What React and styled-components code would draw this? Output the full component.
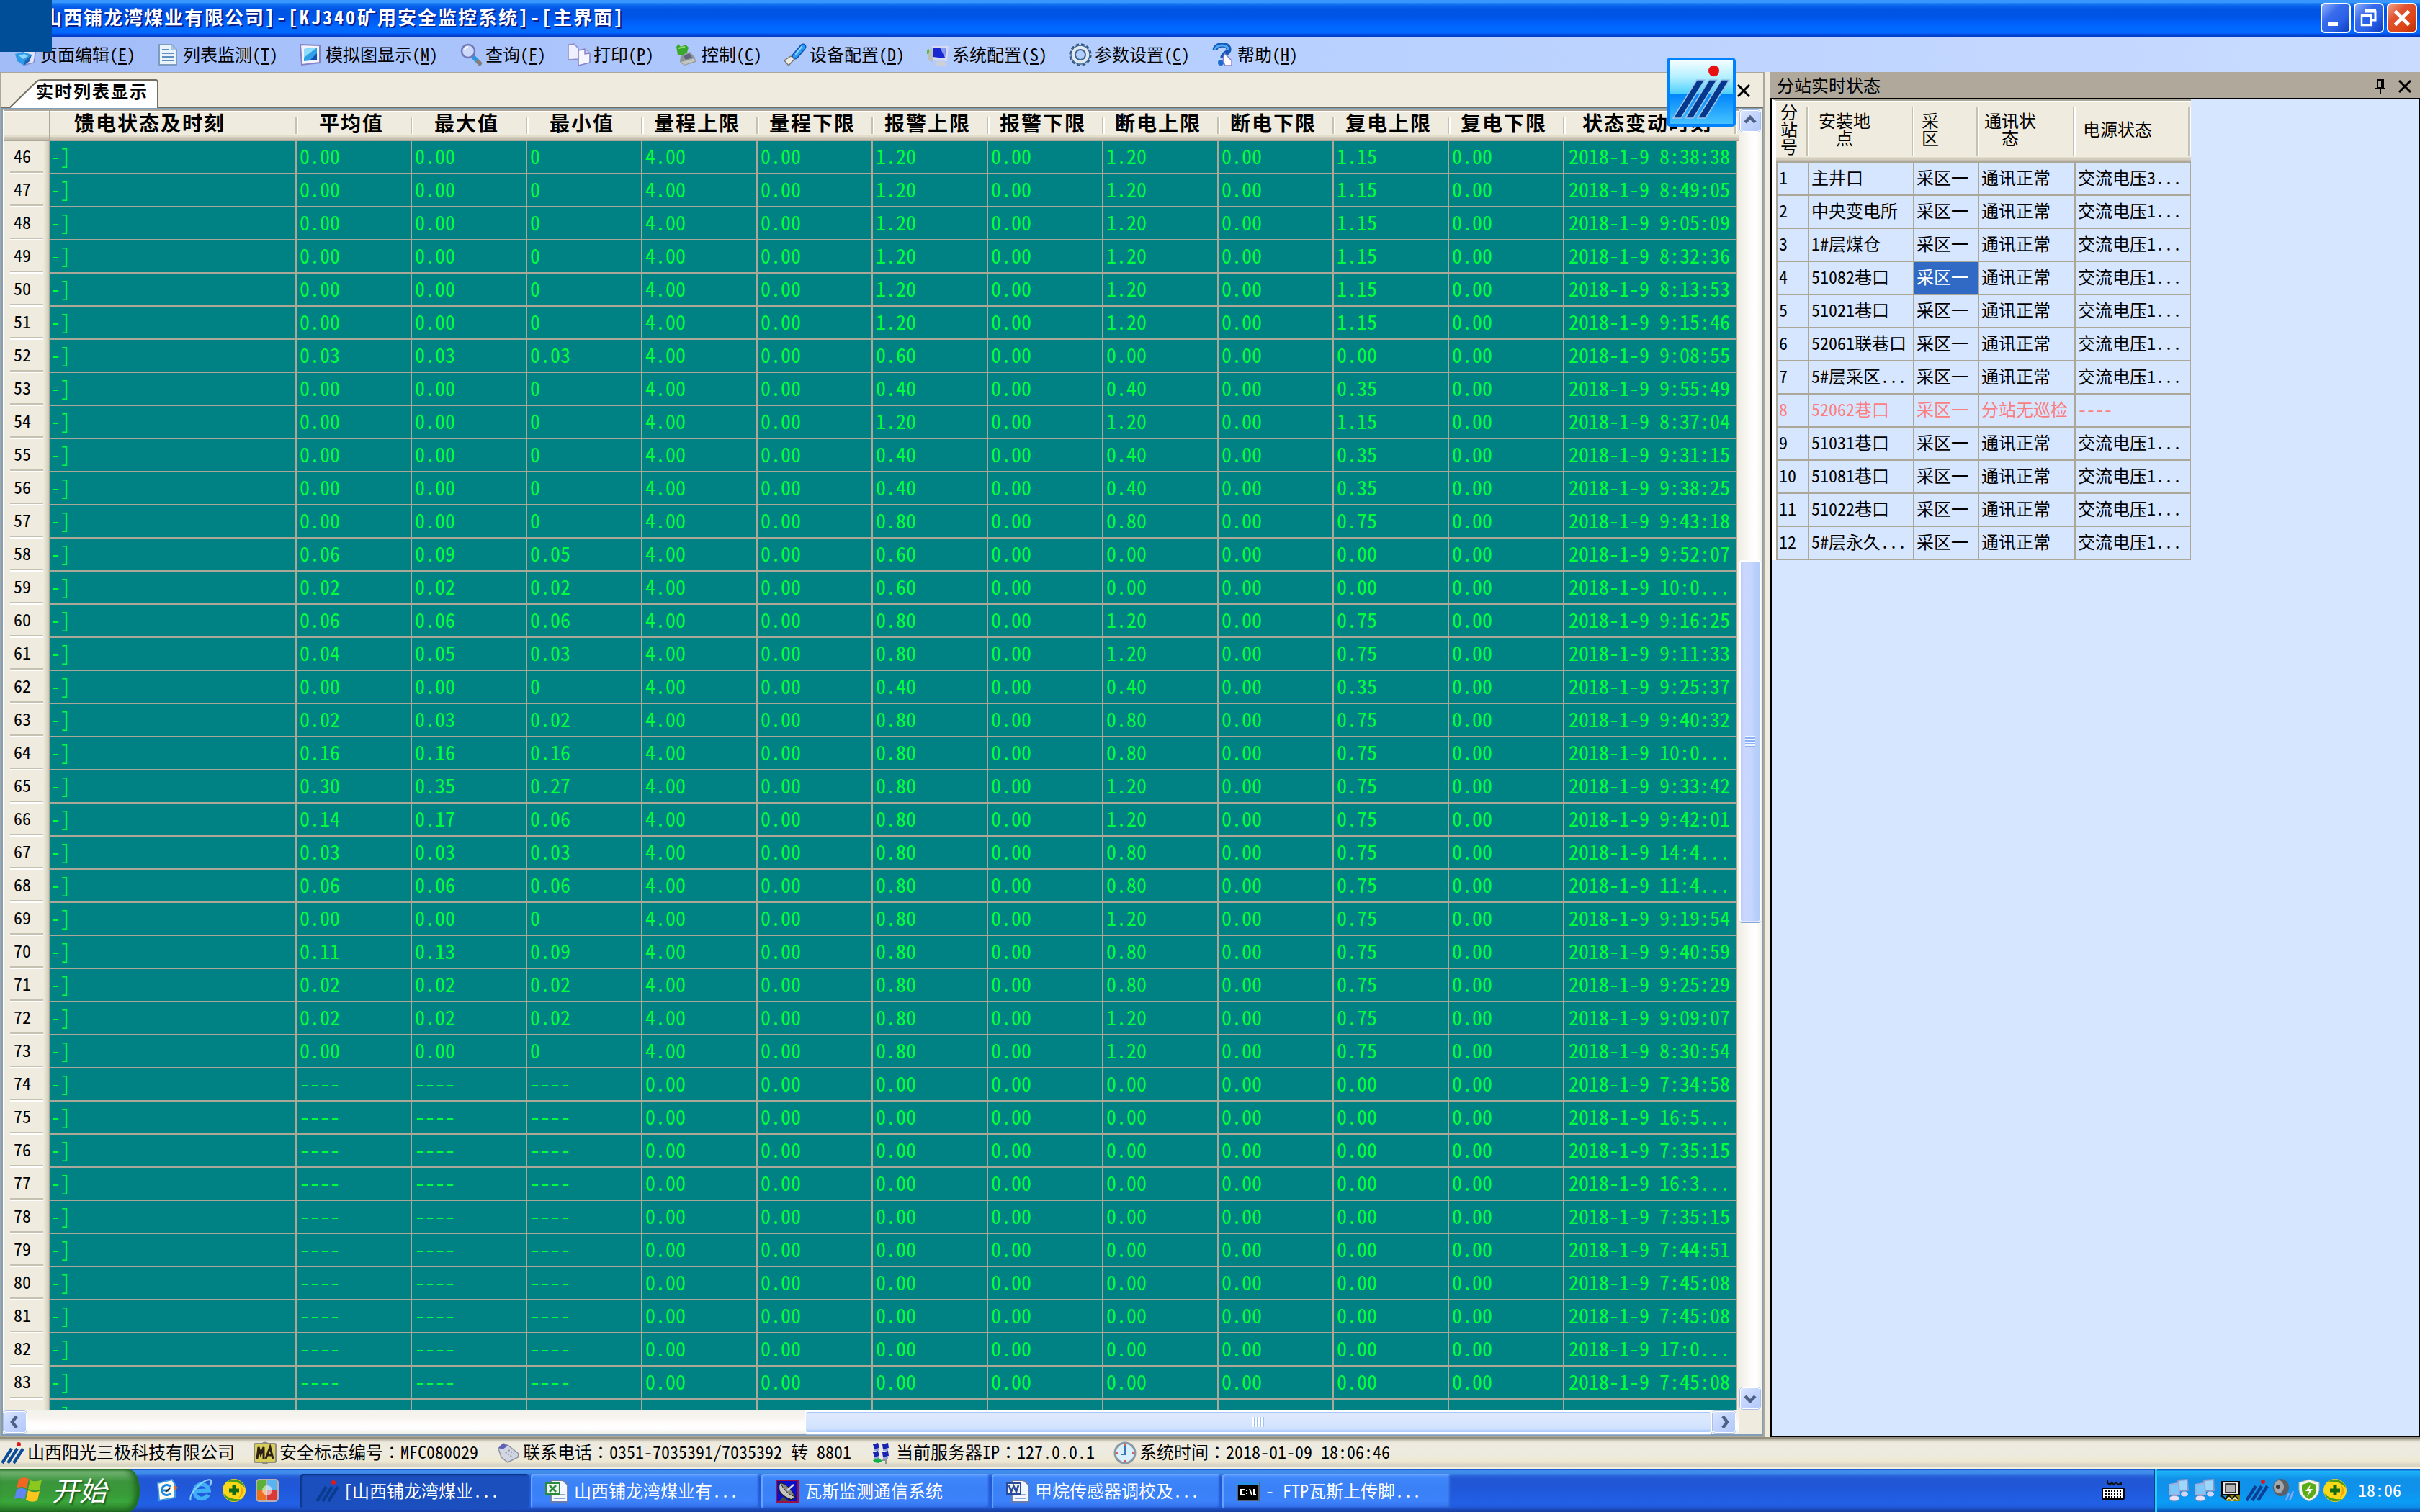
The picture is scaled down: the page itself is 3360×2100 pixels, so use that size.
import React from 'react';
import styled, { createGlobalStyle, css } from 'styled-components';

const GlobalStyle = createGlobalStyle`
  *, *::before, *::after { box-sizing: border-box; }
  html, body { margin: 0; padding: 0; }
  body {
    width: 3360px;
    height: 2100px;
    overflow: hidden;
    background: #efebde;
    color: #000;
    font-family: "Noto Sans Mono CJK SC", "Noto Sans CJK SC", "Liberation Mono", monospace;
    font-size: 24px;
    line-height: 28px;
    font-kerning: none;
  }
`;

const Screen = styled.div`
  position: relative;
  width: 3360px;
  height: 2100px;
  display: flex;
  flex-direction: column;
  overflow: hidden;
  white-space: nowrap;
`;

/* ---------- title bar ---------- */

const TitleBar = styled.header`
  height: 52px;
  flex: none;
  display: flex;
  align-items: flex-start;
  justify-content: space-between;
  padding: 4px 4px 0 44px;
  background: linear-gradient(
    to bottom,
    #3a96ff 0, #3a96ff 4px, #2184f6 4px, #0a66ee 8px, #0054e3 13px, #0055e8 24px,
    #0060fc 32px, #006aff 40px, #0066ff 46px, #0046d8 48px, #0038c0 52px
  );
`;

const TitleText = styled.h1`
  margin: 0;
  padding-top: 3px;
  font-size: 26px;
  line-height: 32px;
  font-weight: 700;
  letter-spacing: 2px;
  color: #fff;
  text-shadow: 2px 2px 0 #0a1f8a;
`;

const Latin = styled.span`
  letter-spacing: 3px;
`;

const WindowButtons = styled.div`
  display: flex;
  gap: 4px;
`;

const WindowButton = styled.button`
  width: 42px;
  height: 42px;
  padding: 0;
  border: 2px solid #fff;
  border-radius: 6px;
  background: ${(p) =>
    p.$close
      ? 'linear-gradient(135deg, #f0a08a 0%, #e0532f 35%, #dc4416 70%, #b83008 100%)'
      : 'linear-gradient(135deg, #8fb0fa 0%, #3a6cec 35%, #2a62e8 65%, #0c3cc0 100%)'};
  display: flex;
  align-items: center;
  justify-content: center;
`;

const CornerPatch = styled.div`
  position: absolute;
  left: 0;
  top: 0;
  width: 72px;
  height: 72px;
  background: #004e98;
`;

const FloatingBadge = styled.div`
  position: absolute;
  left: 2314px;
  top: 80px;
  width: 96px;
  height: 96px;
`;

/* ---------- menu ---------- */

const MenuBar = styled.nav`
  height: 48px;
  flex: none;
  display: flex;
  align-items: center;
  gap: 30px;
  padding-left: 20px;
  background: linear-gradient(to right, #a2bcf8 0, #b4ceff 45%, #c9dbff 100%);
`;

const IconLabel = styled.div`
  display: flex;
  align-items: center;
  gap: 4px;
  > span { margin-bottom: 3px; }
  u {
    text-decoration-thickness: 2px;
    text-underline-offset: 3px;
  }
`;

const WideColon = styled.span`
  font-family: "Noto Sans Mono CJK TC", "Noto Sans CJK TC", monospace;
`;

const Icon32 = styled.svg`
  width: 32px;
  height: 32px;
  flex: none;
  display: block;
`;

/* ---------- workspace ---------- */

const Workspace = styled.main`
  height: 1896px;
  flex: none;
  display: flex;
  background: #efebde;
`;

const DocumentPane = styled.section`
  width: 2450px;
  flex: none;
  display: flex;
  flex-direction: column;
  border: 2px solid #aca899;
`;

const TabStrip = styled.div`
  height: 48px;
  flex: none;
  display: flex;
  align-items: flex-end;
  justify-content: space-between;
  padding: 0 10px 0 10px;
  border-bottom: 2px solid #716f64;
`;

const Tab = styled.div`
  position: relative;
  width: 208px;
  height: 40px;
  margin-bottom: -2px;
  padding: 2px 0 0 38px;
  font-weight: 700;
  letter-spacing: 2px;
`;

const TabShape = styled.svg`
  position: absolute;
  left: 0;
  top: 0;
  width: 208px;
  height: 40px;
`;

const TabText = styled.span`
  position: relative;
`;

const TabClose = styled.div`
  height: 46px;
  display: flex;
  align-items: center;
  padding: 2px 8px 0 0;
`;

const GridFrame = styled.div`
  flex: 1;
  min-height: 0;
  display: grid;
  grid-template-columns: 2410px 32px;
  grid-template-rows: 1806px 34px;
  border: 2px solid #7f9db9;
`;

const GridBody = styled.div`
  overflow: hidden;
  border-top: 2px solid #aca899;
  border-left: 2px solid #fff;
`;

const ColumnHeaders = styled.div`
  display: grid;
  grid-template-columns: 64px 342px repeat(11, 160px) 238px;
  height: 42px;
  background: linear-gradient(
    to bottom,
    #fff 0, #fff 2px, #efebde 2px, #efebde 34px, #e3ddcb 34px, #e3ddcb 36px,
    #d3cdbd 36px, #d3cdbd 38px, #cbc5b6 38px, #c4bcae 40px, #aca899 40px
  );
`;

const ColumnHeader = styled.div`
  position: relative;
  font-size: 28px;
  line-height: 34px;
  font-weight: 700;
  letter-spacing: 2px;
  text-align: center;
  padding: 0 ${(p) => p.$trail || 8}px 0 0;
  > span { position: relative; top: -1px; }
  &::after {
    content: '';
    position: absolute;
    right: -2px;
    top: 8px;
    width: 4px;
    height: 24px;
    background: linear-gradient(to right, #c5c2b2 50%, #fff 50%);
  }
`;

const CornerCell = styled.div`
  border-right: 2px solid #aca899;
  margin-bottom: 2px;
`;

const GridRow = styled.div`
  display: grid;
  grid-template-columns: 64px 342px repeat(11, 160px) 240px;
  height: 46px;
`;

const RowNumber = styled.div`
  position: relative;
  padding: 6px 14px 0 0;
  text-align: center;
  background: linear-gradient(to right, #efebde 0, #efebde 54px, #e2decd 58px, #cbc7b8 62px, #aca899 62px);
  &::after {
    content: '';
    position: absolute;
    left: 8px;
    bottom: 0;
    width: 46px;
    height: 4px;
    background: linear-gradient(to bottom, #c5c2b2 50%, #fff 50%);
  }
`;

const Cell = styled.div`
  overflow: hidden;
  padding: 3px 0 0 ${(p) => (p.$pad === undefined ? 4 : p.$pad)}px;
  font-size: 28px;
  line-height: 34px;
  color: #00ff3c;
  background: #008284;
  border-right: 2px solid #aca899;
  border-bottom: 2px solid #aca899;
`;

/* ---------- scrollbars ---------- */

const VTrack = styled.div`
  display: flex;
  flex-direction: column;
  align-items: center;
  background: linear-gradient(to right, #eeede5 0, #f6f4ee 8px, #fefdfb 18px, #fff 24px, #f3f1ea 32px);
`;

const HTrack = styled.div`
  display: flex;
  align-items: center;
  padding-right: 3px;
  background: linear-gradient(to bottom, #f3f1ec 0, #f6f3ee 10px, #fefdfb 18px, #fff 26px, #efede5 34px);
`;

const ScrollButton = styled.button`
  flex: none;
  width: ${(p) => p.$w}px;
  height: ${(p) => p.$h}px;
  padding: 0;
  border: 2px solid #fff;
  border-radius: 5px;
  outline: 1px solid #a9bfe4;
  outline-offset: -1px;
  background: linear-gradient(135deg, #dbe5fe 0%, #c6d6fd 40%, #b4c9fb 100%);
  display: flex;
  align-items: center;
  justify-content: center;
`;

const Spacer = styled.div`
  flex: ${(p) => (p.$size ? 'none' : 1)};
  height: ${(p) => (p.$size ? `${p.$size}px` : 'auto')};
`;

const VThumb = styled.div`
  flex: none;
  width: 30px;
  height: 503px;
  border: 2px solid #fff;
  border-bottom-color: #dbe6fb;
  border-radius: 4px;
  background: linear-gradient(to right, #b9ccf6 0, #cad6fe 4px, #c8d6fd 14px, #b9d0fd 20px, #b2cbf7 26px);
  box-shadow: 0 1px 0 #8aa6d6;
  display: flex;
  align-items: center;
  justify-content: center;
`;

const HThumb = styled.div`
  flex: none;
  width: 1260px;
  height: 32px;
  border: 2px solid #fff;
  border-radius: 4px;
  background: linear-gradient(to bottom, #a6c8fc 0, #a6c8fc 2px, #dfe9fd 2px, #d8e6fe 14px, #d0e1fe 24px, #aecdfb 26px, #aecdfb 28px);
  box-shadow: 0 2px 0 #a0b8da;
  display: flex;
  align-items: center;
  justify-content: center;
`;

const Grip = styled.div`
  ${(p) =>
    p.$vertical
      ? css`
          width: 14px;
          height: 16px;
          background: repeating-linear-gradient(to bottom, #eef4fe 0, #eef4fe 2px, #8cb0f8 2px, #8cb0f8 4px);
        `
      : css`
          width: 16px;
          height: 14px;
          background: repeating-linear-gradient(to right, #fff 0, #fff 2px, #9cc4fa 2px, #9cc4fa 4px);
        `}
`;

const ScrollCorner = styled.div`
  background: #efebde;
`;

/* ---------- side panel ---------- */

const SidePanel = styled.aside`
  width: 902px;
  margin-left: 8px;
  display: flex;
  flex-direction: column;
`;

const PanelTitle = styled.div`
  height: 36px;
  flex: none;
  display: flex;
  align-items: center;
  justify-content: space-between;
  padding: 0 12px 0 9px;
  background: #b0a99b;
`;

const PanelTools = styled.div`
  display: flex;
  gap: 18px;
  align-items: center;
  padding-top: 3px;
`;

const PanelBody = styled.div`
  flex: 1;
  border: 2px solid #000;
  background: #d6e6ff;
`;

const StationTable = styled.div`
  width: 582px;
  border-left: 6px solid #fff;
  border-top: 2px solid #aca899;
  box-shadow: inset 2px 0 0 #aca899;
`;

const stationColumns = css`
  display: grid;
  grid-template-columns: 46px 146px 90px 134px 160px;
`;

const StationHead = styled.div`
  ${stationColumns}
  height: 86px;
  background: linear-gradient(
    to bottom,
    #fff 0, #fff 2px, #efebde 2px, #efebde 78px, #e3ddcb 78px, #e3ddcb 80px,
    #d3cdbd 80px, #d3cdbd 82px, #c6bfb0 82px, #c6bfb0 84px, #aca899 84px
  );
`;

const StationHeadCell = styled.div`
  position: relative;
  display: flex;
  align-items: center;
  justify-content: center;
  text-align: center;
  line-height: 24px;
  white-space: pre-line;
  padding: 0 ${(p) => p.$trail}px 9px 0;
  &::after {
    content: '';
    position: absolute;
    right: 0;
    top: 8px;
    width: 4px;
    height: 68px;
    background: linear-gradient(to right, #c5c2b2 50%, #fff 50%);
  }
`;

const StationRow = styled.div`
  ${stationColumns}
  height: 46px;
  color: ${(p) => (p.$alarm ? '#fa7f80' : '#000')};
`;

const StationCell = styled.div`
  overflow: hidden;
  padding: 6px 0 0 3px;
  border-right: 2px solid #aca899;
  border-bottom: 2px solid #aca899;
  &:first-child { border-left: 2px solid #aca899; padding-left: 2px; }
  ${(p) =>
    p.$selected &&
    css`
      background: #316ac5;
      color: #fff;
    `}
`;

/* ---------- status bar ---------- */

const StatusBar = styled.footer`
  height: 44px;
  flex: none;
  display: flex;
  align-items: center;
  gap: 26px;
  padding: 0 0 1px 2px;
  background: linear-gradient(
    to bottom,
    #938f7f 0, #938f7f 2px, #bdb9a9 2px, #bdb9a9 4px, #dcd8ca 5px, #eeeade 8px,
    #edebe1 22px, #eee8d2 34px, #dbd7c6 38px, #d8d4c2 41px, #f1eee2 42px
  );
`;

/* ---------- task bar ---------- */

const TaskBar = styled.footer`
  height: 60px;
  flex: none;
  display: flex;
  color: #fff;
  background: linear-gradient(
    to bottom,
    #1c5bd2 0, #1c5bd2 2px, #3f8cea 2px, #3f8cea 6px, #2c69de 9px, #2157d4 14px,
    #2058da 28px, #2160e6 48px, #2157d8 54px, #1941a5 58px, #1941a5 60px
  );
`;

const StartButton = styled.button`
  width: 194px;
  padding: 0 0 3px 20px;
  border: 0;
  border-radius: 0 16px 16px 0 / 0 30px 30px 0;
  display: flex;
  align-items: center;
  gap: 12px;
  color: #fff;
  font-family: inherit;
  font-size: 38px;
  line-height: 44px;
  font-style: italic;
  text-shadow: 2px 2px 2px #1d5a1d;
  background: linear-gradient(
    to bottom,
    #2f7d30 0, #79b879 4px, #5ba65b 10px, #3b953b 18px, #389a38 34px, #3aa63a 46px, #2c842c 56px, #1f6420 60px
  );
  box-shadow: inset -6px 0 8px #1d661f;
`;

const QuickLaunch = styled.div`
  width: 223px;
  padding-left: 23px;
  display: flex;
  align-items: center;
  gap: 14px;
`;

const TaskButtons = styled.div`
  flex: 1;
  display: flex;
  gap: 3px;
  padding: 7px 0 5px;
`;

const TaskButton = styled.button`
  width: 317px;
  padding: 0 0 0 ${(p) => (p.$active ? 22 : 20)}px;
  border: 0;
  border-radius: 4px;
  display: flex;
  align-items: center;
  gap: ${(p) => (p.$active ? 6 : 8)}px;
  color: #fff;
  font: inherit;
  > span { margin-bottom: 3px; }
  background: ${(p) =>
    p.$active
      ? '#1a4fbd'
      : 'linear-gradient(to bottom, #5a9cff 0, #3f86fa 6px, #3a80f6 20px, #3c82fb 38px, #326fe8 48px)'};
  box-shadow: ${(p) =>
    p.$active ? 'inset 2px 2px 2px #0f3484' : 'inset 2px 2px 1px #6aa6ff, inset -2px -2px 2px #2a5fd4'};
`;

const InputMethod = styled.div`
  width: 72px;
  display: flex;
  align-items: center;
`;

const Tray = styled.div`
  width: 370px;
  display: flex;
  align-items: center;
  gap: 4px;
  padding-left: 18px;
  border-left: 2px solid #0b3a86;
  background: linear-gradient(
    to bottom,
    #0e62d0 0, #0e62d0 2px, #1cb4f8 3px, #18a4f2 8px, #1191e8 14px, #0f92ec 30px, #0a9cf6 46px, #0c8ce8 54px, #0b55b8 58px
  );
  box-shadow: inset 3px 0 0 #1ed0fc;
`;

const Clock = styled.time`
  margin: 0 0 2px 12px;
`;

/* ---------- drawings ---------- */

const Chevron = ({ dir }) => {
  const points = {
    up: '3,12 10,5 17,12',
    down: '3,7 10,14 17,7',
    left: '12,2 6,10 12,18',
    right: '8,2 14,10 8,18',
  }[dir];
  return (
    <svg width="20" height="20" viewBox="0 0 20 20">
      <polyline points={points} fill="none" stroke="#4d6185" strokeWidth="4.5" />
    </svg>
  );
};

const CrossMark = ({ size = 18, color = '#000', width = 3 }) => (
  <svg width={size} height={size} viewBox="0 0 18 18">
    <path d="M1 1 L17 17 M17 1 L1 17" stroke={color} strokeWidth={width} />
  </svg>
);

const PinMark = () => (
  <svg width="14" height="20" viewBox="0 0 14 20">
    <path d="M3 1 H11 V12 H3 Z M0 13 H14 M7 13 V20" fill="none" stroke="#000" strokeWidth="2" />
    <path d="M9 1 V12" stroke="#000" strokeWidth="2" />
  </svg>
);

const BrandIcon = ({ color = '#0c4c98' }) => (
  <Icon32 viewBox="0 0 32 32">
    <path d="M1 30 L14 10 M9 30 L22 10 M17 30 L30 10" stroke={color} strokeWidth="4.2" />
    <circle cx="24" cy="4" r="3" fill="#e01818" />
  </Icon32>
);

const BadgeArt = () => (
  <svg width="96" height="96" viewBox="0 0 96 96">
    <defs>
      <linearGradient id="badgeTop" x1="0" y1="0" x2="0" y2="1">
        <stop offset="0" stopColor="#f4fdff" />
        <stop offset="0.5" stopColor="#b4f0ff" />
        <stop offset="1" stopColor="#4fd0fc" />
      </linearGradient>
      <linearGradient id="badgeLow" x1="0" y1="0" x2="0" y2="1">
        <stop offset="0" stopColor="#0084fb" />
        <stop offset="1" stopColor="#45c2ff" />
      </linearGradient>
    </defs>
    <rect width="96" height="96" rx="5" fill="#0082fc" />
    <rect x="4" y="4" width="88" height="46" fill="url(#badgeTop)" />
    <rect x="4" y="50" width="88" height="42" fill="url(#badgeLow)" />
    <g stroke="#9cc4ea" strokeWidth="1.6" fill="#04388c">
      <path d="M42 31 H53 L20 84 H9 Z" />
      <path d="M59 31 H70 L37 84 H26 Z" />
      <path d="M76 31 H87 L54 84 H43 Z" />
    </g>
    <ellipse cx="65.5" cy="18.5" rx="7.5" ry="7.8" fill="#e81010" />
  </svg>
);

const EditIcon = () => (
  <Icon32 viewBox="0 0 32 32">
    <path d="M12 4 L30 8 L27 27 L15 30 Z" fill="#dfe4f8" stroke="#8a8cc8" strokeWidth="1.5" />
    <path d="M1 15 L12 12 L24 16 L21 25 L13 31 L4 25 Z" fill="#2f9ae6" />
    <path d="M6 17 L14 15 L19 18 L12 22 Z" fill="#8fd8fb" />
    <path d="M13 31 L21 25 L24 16 L15 24 Z" fill="#1d62b4" />
  </Icon32>
);

const ListIcon = () => (
  <Icon32 viewBox="0 0 32 32">
    <path d="M3 2 H20 L27 9 V30 H3 Z" fill="#e8f3fc" stroke="#7e9cbe" strokeWidth="2" />
    <path d="M20 2 L27 9 H20 Z" fill="#a8c4de" />
    <path d="M7 9 H16 M7 14 H23 M7 19 H23 M7 24 H23" stroke="#5f8fc0" strokeWidth="2" />
  </Icon32>
);

const ScreenIcon = () => (
  <Icon32 viewBox="0 0 32 32">
    <path d="M1 2 L28 3 V27 L3 30 Z" fill="#f3f2fd" stroke="#8582c4" strokeWidth="2" />
    <path d="M6 8 L24 6 V23 L6 25 Z" fill="#2f9fe8" />
    <path d="M6 8 L24 6 L6 20 Z" fill="#8fdcfb" />
    <path d="M14 24 L24 14 V23 Z" fill="#0c50b0" />
  </Icon32>
);

const SearchIcon = () => (
  <Icon32 viewBox="0 0 32 32">
    <path d="M19 19 L28 28" stroke="#2f94dc" strokeWidth="6" strokeLinecap="round" />
    <path d="M26 26 L28 28" stroke="#8a7f78" strokeWidth="6" strokeLinecap="round" />
    <circle cx="12" cy="11" r="9" fill="#cdd8fb" stroke="#7277b8" strokeWidth="2.5" />
    <path d="M7 10 A6 6 0 0 1 12 5" stroke="#fff" strokeWidth="2" fill="none" />
  </Icon32>
);

const PrintIcon = () => (
  <Icon32 viewBox="0 0 32 32">
    <path d="M1 2 L9 1 L15 7 V22 L1 23 Z" fill="#eef0ff" stroke="#8f8fca" strokeWidth="1.6" />
    <path d="M15 10 L24 8 L31 14 V27 L15 31 Z" fill="#f5f5ff" stroke="#8482c4" strokeWidth="1.6" />
    <path d="M24 8 V15 L31 14" fill="#c8c8ee" stroke="#8482c4" strokeWidth="1.4" />
  </Icon32>
);

const ControlIcon = () => (
  <Icon32 viewBox="0 0 32 32">
    <path d="M7 18 L20 12 L27 20 L28 26 L12 31 L6 26 Z" fill="#909494" />
    <path d="M11 18 L19 14 L23 20 L14 23 Z" fill="#5d6480" />
    <path d="M8 26 L26 21 L27 25 L12 30 Z" fill="#c2c6c2" />
    <path d="M1 5 L4 1 L7 5 L14 2 L18 6 L16 13 L9 17 L3 16 Z" fill="#3aa82a" />
    <path d="M4 7 L13 5" stroke="#8fe070" strokeWidth="2" />
  </Icon32>
);

const BrushIcon = () => (
  <Icon32 viewBox="0 0 32 32">
    <path d="M27 5 L16 18" stroke="#0d4eb4" strokeWidth="9" strokeLinecap="round" />
    <path d="M27 5 L16 18" stroke="#2c9cf4" strokeWidth="6" strokeLinecap="round" />
    <path d="M25 5 L17 15" stroke="#a0defc" strokeWidth="2" strokeLinecap="round" />
    <path d="M10 18 L15 22 L7 31 L1 24 Z" fill="#eceae6" stroke="#77726c" strokeWidth="1.4" />
  </Icon32>
);

const SystemIcon = () => (
  <Icon32 viewBox="0 0 32 32">
    <path d="M1 13 L9 6 V26 L3 24 Z" fill="#b8c0b8" />
    <path d="M1 10 L4 8 V14 L1 15 Z" fill="#5cb840" />
    <path d="M8 4 H31 L29 25 L10 24 Z" fill="#d5daf2" />
    <path d="M10 6 H27 L26 21 L9 19 Z" fill="#1828d0" />
    <path d="M19 6 H27 L26 20 Z" fill="#8a9cf0" />
    <path d="M15 25 L27 26 L28 31 H12 Z" fill="#cdd0d4" />
  </Icon32>
);

const GearIcon = () => (
  <Icon32 viewBox="0 0 32 32">
    <circle cx="16" cy="16" r="14" fill="none" stroke="#34587e" strokeWidth="3.4" strokeDasharray="4.4 3" />
    <circle cx="16" cy="16" r="10.5" fill="none" stroke="#dfe9f2" strokeWidth="6" />
    <circle cx="16" cy="16" r="13" fill="none" stroke="#40658c" strokeWidth="1.4" />
    <circle cx="16" cy="16" r="7" fill="none" stroke="#40658c" strokeWidth="2" />
  </Icon32>
);

const HelpIcon = () => (
  <Icon32 viewBox="0 0 32 32">
    <path d="M5 10 C5 0 25 0 24 9 C24 14 16 14 16 20" fill="none" stroke="#1558b8" strokeWidth="7" />
    <path d="M5 9 C6 1 24 1 23 9" fill="none" stroke="#4fa8f0" strokeWidth="3" />
    <circle cx="13" cy="27" r="4" fill="#1c6cd0" />
    <path d="M18 14 L28 24 L28 31 L19 31 L16 24 Z" fill="#fff" stroke="#8a80d0" strokeWidth="1.5" />
  </Icon32>
);

const SafetyIcon = () => (
  <Icon32 viewBox="0 0 32 32">
    <path d="M10 3 Q16 -2 22 3 Z M10 29 Q16 34 22 29 Z" fill="#8c8878" />
    <rect x="1" y="3" width="30" height="26" rx="2" fill="#d8cd58" stroke="#8f8c86" strokeWidth="2" />
    <path d="M5 24 L7 8 L10 18 L14 8 L14 24 M17 24 L23 8 L27 24 M19 19 H26" fill="none" stroke="#2c1f14" strokeWidth="3" />
  </Icon32>
);

const PhoneIcon = () => (
  <Icon32 viewBox="0 0 32 32">
    <path d="M2 10 L9 3 L16 6 L30 17 L29 22 L15 29 L6 22 Z" fill="#d2d6e2" stroke="#8f94a4" strokeWidth="1.5" />
    <path d="M2 9 L8 3 L15 6 L8 11 Z" fill="#5c60b8" />
    <path d="M12 15 L22 22 M16 12 L26 19" stroke="#9097ac" strokeWidth="2" strokeDasharray="2 2" />
  </Icon32>
);

const ServerIcon = () => (
  <Icon32 viewBox="0 0 32 32">
    <g fill="#1a24b4">
      <path d="M4 4 L11 2 L13 9 L6 11 Z" />
      <path d="M17 4 L25 2 L26 9 L18 11 Z" />
      <path d="M4 15 L11 13 L13 20 L6 22 Z" />
      <path d="M17 15 L25 13 L26 20 L18 22 Z" />
    </g>
    <path d="M6 12 H13 M18 12 H25 M6 23 H13 M18 23 H25" stroke="#9aa4dc" strokeWidth="2" />
    <path d="M4 26 L12 23 L17 27 L12 30 L6 29 Z" fill="#12b04c" />
    <path d="M16 26 H22 V31" stroke="#8a9898" strokeWidth="2" fill="none" />
  </Icon32>
);

const ClockIcon = () => (
  <Icon32 viewBox="0 0 32 32">
    <circle cx="16" cy="16" r="14" fill="#d8f0fc" stroke="#8b98a4" strokeWidth="3" />
    <path d="M16 7 V18 H11" fill="none" stroke="#3d76b8" strokeWidth="2" />
    <path d="M16 4 V6 M16 26 V28 M4 16 H6 M26 16 H28" stroke="#d85a50" strokeWidth="2" />
  </Icon32>
);

const FlagIcon = () => (
  <svg width="40" height="38" viewBox="0 0 40 38">
    <path d="M6 5 Q12 0 20 4 L17 17 Q10 13 3 17 Z" fill="#f26522" />
    <path d="M22 6 Q30 9 38 5 L35 19 Q28 22 19 18 Z" fill="#8cc81e" />
    <path d="M3 19 Q9 15 17 19 L14 33 Q8 29 0 32 Z" fill="#5f86f4" />
    <path d="M19 20 Q27 24 35 21 L32 34 Q24 38 16 33 Z" fill="#fcc41c" />
  </svg>
);

const MailIcon = () => (
  <Icon32 viewBox="0 0 32 32">
    <path d="M2 6 L22 1 L26 8 L26 26 L4 30 Z" fill="#fdfaf0" stroke="#3f98e0" strokeWidth="2" />
    <path d="M20 11 A7 7 0 1 0 20 20 M10 16 H18" fill="none" stroke="#1d8ae4" strokeWidth="3" />
    <path d="M13 18 L19 13" stroke="#222" strokeWidth="2" />
    <path d="M24 9 L30 12 L26 16 Z" fill="#f06a1c" />
  </Icon32>
);

const BrowserIcon = () => (
  <Icon32 viewBox="0 0 32 32">
    <path d="M26 22 A10 10 0 1 1 27 16 L9 17" fill="none" stroke="#3fb0f6" strokeWidth="5.5" />
    <path d="M2 30 C-2 22 16 2 28 1 C32 2 30 8 28 10" fill="none" stroke="#8ed0fa" strokeWidth="2" />
  </Icon32>
);

const PlusBallIcon = () => (
  <Icon32 viewBox="0 0 32 32">
    <circle cx="16" cy="16" r="16" fill="#f8d818" />
    <path d="M6 4 A16 16 0 0 1 31 12 Q22 2 6 4 Z M26 28 A16 16 0 0 1 1 20 Q10 30 26 28 Z" fill="#4a9c1c" />
    <path d="M24 8 Q34 18 22 27 Q28 18 24 8 Z" fill="#f8a010" />
    <path d="M16 9 V23 M9 16 H23" stroke="#176a14" strokeWidth="5" />
  </Icon32>
);

const TilesIcon = () => (
  <Icon32 viewBox="0 0 32 32">
    <rect width="32" height="32" rx="5" fill="#b8b0b0" />
    <path d="M2 5 Q2 2 5 2 H15 V15 H2 Z" fill="#5cb038" />
    <path d="M16 2 H27 Q30 2 30 5 V15 H16 Z" fill="#5ab4f0" />
    <path d="M2 16 H15 V30 H5 Q2 30 2 27 Z" fill="#ec7020" />
    <path d="M16 16 H30 V27 Q30 30 27 30 H16 Z" fill="#dc3838" />
    <circle cx="16" cy="16" r="7" fill="#fff" opacity="0.55" />
  </Icon32>
);

const DocIcon = ({ color, mark }) => (
  <Icon32 viewBox="0 0 32 32">
    <path d="M8 1 H24 L31 7 V31 H8 Z" fill="#f3f7ff" stroke="#6a7ea8" strokeWidth="1.8" />
    <path d="M12 21 H27 M12 26 H27" stroke="#8fa6d0" strokeWidth="2" />
    <rect x="1" y="5" width="19" height="15" fill="#eef4ee" stroke={color} strokeWidth="2" />
    <path d={mark} fill="none" stroke={color} strokeWidth="2.6" />
  </Icon32>
);

const DishIcon = () => (
  <Icon32 viewBox="0 0 32 32">
    <rect x="1" y="1" width="30" height="30" fill="#0a10c8" stroke="#a01040" strokeWidth="2" />
    <path d="M6 4 Q-1 20 22 28 L27 24 Z" fill="#c4c4c0" stroke="#202020" strokeWidth="1.5" />
    <path d="M6 4 Q20 8 27 24 Q14 20 6 4 Z" fill="#8a8a88" stroke="#202020" strokeWidth="1" />
    <path d="M16 15 L25 7" stroke="#d8d8d8" strokeWidth="2.4" />
    <path d="M10 24 L5 30 H18 Z" fill="#4a4a4a" />
  </Icon32>
);

const ConsoleIcon = () => (
  <Icon32 viewBox="0 0 32 32">
    <rect x="1" y="5" width="30" height="24" fill="#000" stroke="#5a6474" strokeWidth="2" />
    <rect x="1" y="4" width="30" height="4" fill="#2a90e8" />
    <path d="M11 14 H6 V21 H11 M14 15 V16 M14 19 V20 M18 13 L21 21 M24 13 V21 H27" fill="none" stroke="#fff" strokeWidth="2" />
  </Icon32>
);

const KeyboardIcon = () => (
  <svg width="32" height="28" viewBox="0 0 32 28">
    <path d="M8 0 V4 L12 6 L14 3 L17 6 L20 3 L23 6 L27 4 V6" fill="none" stroke="#111" strokeWidth="2" />
    <rect x="1" y="11" width="30" height="15" rx="1" fill="#fff" stroke="#000" strokeWidth="2" />
    <path d="M5 15 H27 M5 19 H27 M5 23 H27" stroke="#000" strokeWidth="2" strokeDasharray="2 2" />
  </svg>
);

const NetworkIcon = () => (
  <Icon32 viewBox="0 0 32 32">
    <path d="M14 2 L27 1 L28 16 L15 17 Z" fill="#9cd8fc" stroke="#8a96c4" strokeWidth="2" />
    <path d="M2 8 L15 6 L16 22 L3 22 Z" fill="#7cc8fa" stroke="#a4acd8" strokeWidth="2" />
    <ellipse cx="23" cy="21" rx="5" ry="3.5" fill="#d8d4f0" />
    <ellipse cx="9" cy="27" rx="7" ry="4" fill="#e6e2f8" stroke="#8484b4" strokeWidth="1" />
  </Icon32>
);

const TerminalIcon = () => (
  <Icon32 viewBox="0 0 32 32">
    <rect x="3" y="4" width="24" height="18" fill="#e8e8e8" stroke="#000" strokeWidth="2" />
    <rect x="8" y="7" width="14" height="12" fill="#b4b4b4" stroke="#111" strokeWidth="1.5" />
    <path d="M8 22 H28 V31 H10 Z" fill="#8a8410" />
    <path d="M2 23 L8 28 L12 23 L17 28 L21 24 L25 28" stroke="#1a1608" strokeWidth="2.5" fill="none" />
    <path d="M10 29 L13 26 L17 30 L21 26 L25 30" stroke="#f4ecb0" strokeWidth="1.6" fill="none" />
  </Icon32>
);

const SpeakerIcon = () => (
  <Icon32 viewBox="0 0 32 32">
    <ellipse cx="13" cy="12" rx="11" ry="12" fill="#5c5f64" />
    <ellipse cx="10" cy="11" rx="7" ry="9" fill="#a4a8ac" />
    <circle cx="9" cy="11" r="3" fill="#3a3c40" />
    <path d="M20 30 L24 20 M25 30 L30 17" stroke="#86a8f4" strokeWidth="2.4" />
  </Icon32>
);

const ShieldIcon = () => (
  <Icon32 viewBox="0 0 32 32">
    <path d="M16 1 L30 5 V16 Q28 27 16 31 Q4 27 2 16 V5 Z" fill="#f2f6ee" stroke="#a8b4a4" strokeWidth="1" />
    <path d="M16 5 L26 8 V16 Q25 24 16 28 Q7 24 6 16 V8 Z" fill="#5cac18" />
    <path d="M18 8 L11 17 H16 L13 25 L21 14 H16 Z" fill="#fff" />
  </Icon32>
);

/* ---------- data ---------- */

const MENU = [
  ['页面编辑', 'E', EditIcon],
  ['列表监测', 'T', ListIcon],
  ['模拟图显示', 'M', ScreenIcon],
  ['查询', 'F', SearchIcon],
  ['打印', 'P', PrintIcon],
  ['控制', 'C', ControlIcon],
  ['设备配置', 'D', BrushIcon],
  ['系统配置', 'S', SystemIcon],
  ['参数设置', 'C', GearIcon],
  ['帮助', 'H', HelpIcon],
];

const HEADERS = [
  '平均值', '最大值', '最小值', '量程上限', '量程下限', '报警上限',
  '报警下限', '断电上限', '断电下限', '复电上限', '复电下限',
];

// average, max, min, alarm limit, cut-off limit, restore limit, time
const READINGS = [
  '0.00 0.00 0 1.20 1.20 1.15 8:38:38',
  '0.00 0.00 0 1.20 1.20 1.15 8:49:05',
  '0.00 0.00 0 1.20 1.20 1.15 9:05:09',
  '0.00 0.00 0 1.20 1.20 1.15 8:32:36',
  '0.00 0.00 0 1.20 1.20 1.15 8:13:53',
  '0.00 0.00 0 1.20 1.20 1.15 9:15:46',
  '0.03 0.03 0.03 0.60 0.00 0.00 9:08:55',
  '0.00 0.00 0 0.40 0.40 0.35 9:55:49',
  '0.00 0.00 0 1.20 1.20 1.15 8:37:04',
  '0.00 0.00 0 0.40 0.40 0.35 9:31:15',
  '0.00 0.00 0 0.40 0.40 0.35 9:38:25',
  '0.00 0.00 0 0.80 0.80 0.75 9:43:18',
  '0.06 0.09 0.05 0.60 0.00 0.00 9:52:07',
  '0.02 0.02 0.02 0.60 0.00 0.00 10:0...',
  '0.06 0.06 0.06 0.80 1.20 0.75 9:16:25',
  '0.04 0.05 0.03 0.80 1.20 0.75 9:11:33',
  '0.00 0.00 0 0.40 0.40 0.35 9:25:37',
  '0.02 0.03 0.02 0.80 0.80 0.75 9:40:32',
  '0.16 0.16 0.16 0.80 0.80 0.75 10:0...',
  '0.30 0.35 0.27 0.80 1.20 0.75 9:33:42',
  '0.14 0.17 0.06 0.80 1.20 0.75 9:42:01',
  '0.03 0.03 0.03 0.80 0.80 0.75 14:4...',
  '0.06 0.06 0.06 0.80 0.80 0.75 11:4...',
  '0.00 0.00 0 0.80 1.20 0.75 9:19:54',
  '0.11 0.13 0.09 0.80 0.80 0.75 9:40:59',
  '0.02 0.02 0.02 0.80 0.80 0.75 9:25:29',
  '0.02 0.02 0.02 0.80 1.20 0.75 9:09:07',
  '0.00 0.00 0 0.80 1.20 0.75 8:30:54',
  ...['7:34:58', '16:5...', '7:35:15', '16:3...', '7:35:15', '7:44:51', '7:45:08', '7:45:08', '17:0...', '7:45:08'].map(
    (t) => `---- ---- ---- 0.00 0.00 0.00 ${t}`
  ),
].map((line, i) => {
  const [avg, max, min, alarm, cut, restore, time] = line.split(' ');
  const range = avg === '----' ? '0.00' : '4.00';
  return {
    no: 46 + i,
    values: [avg, max, min, range, '0.00', alarm, '0.00', cut, '0.00', restore, '0.00'],
    time: `2018-1-9 ${time}`,
  };
});

const STATIONS = [
  ['1', '主井口', '采区一', '通讯正常', '交流电压3...'],
  ['2', '中央变电所', '采区一', '通讯正常', '交流电压1...'],
  ['3', '1#层煤仓', '采区一', '通讯正常', '交流电压1...'],
  ['4', '51082巷口', '采区一', '通讯正常', '交流电压1...'],
  ['5', '51021巷口', '采区一', '通讯正常', '交流电压1...'],
  ['6', '52061联巷口', '采区一', '通讯正常', '交流电压1...'],
  ['7', '5#层采区...', '采区一', '通讯正常', '交流电压1...'],
  ['8', '52062巷口', '采区一', '分站无巡检', '----'],
  ['9', '51031巷口', '采区一', '通讯正常', '交流电压1...'],
  ['10', '51081巷口', '采区一', '通讯正常', '交流电压1...'],
  ['11', '51022巷口', '采区一', '通讯正常', '交流电压1...'],
  ['12', '5#层永久...', '采区一', '通讯正常', '交流电压1...'],
];

const STATUS = [
  ['山西阳光三极科技有限公司', null, BrandIcon],
  ['安全标志编号', 'MFC080029', SafetyIcon],
  ['联系电话', '0351-7035391/7035392 转 8801', PhoneIcon],
  ['当前服务器IP', '127.0.0.1', ServerIcon],
  ['系统时间', '2018-01-09 18:06:46', ClockIcon],
];

export default function App() {
  return (
    <Screen>
      <GlobalStyle />
      <TitleBar>
        <TitleText>
          <Latin>[</Latin>山西铺龙湾煤业有限公司<Latin>]-[KJ340</Latin>矿用安全监控系统<Latin>]-[</Latin>主界面<Latin>]</Latin>
        </TitleText>
        <WindowButtons>
          <WindowButton aria-label="最小化">
            <svg width="38" height="38" viewBox="0 0 38 38"><rect x="8" y="24" width="14" height="6" fill="#fff" /></svg>
          </WindowButton>
          <WindowButton aria-label="还原">
            <svg width="38" height="38" viewBox="0 0 38 38">
              <path d="M14 10 H28 V22 H24" fill="none" stroke="#fff" strokeWidth="3" />
              <path d="M13 8.5 H29" stroke="#fff" strokeWidth="4" />
              <rect x="9" y="16" width="13" height="13" fill="#2a62e8" stroke="#fff" strokeWidth="2.5" />
              <path d="M8 16 H23" stroke="#fff" strokeWidth="4" />
            </svg>
          </WindowButton>
          <WindowButton $close aria-label="关闭"><CrossMark size={22} color="#fff" width={4} /></WindowButton>
        </WindowButtons>
      </TitleBar>

      <MenuBar>
        {MENU.map(([label, key, Glyph]) => (
          <IconLabel key={label}>
            <Glyph />
            <span>{label}(<u>{key}</u>)</span>
          </IconLabel>
        ))}
      </MenuBar>

      <Workspace>
        <DocumentPane>
          <TabStrip>
            <Tab>
              <TabShape viewBox="0 0 208 40">
                <path d="M1 40 L38 4 Q41 1 46 1 H204 Q207 1 207 5 V40" fill="#fff" stroke="#716f64" strokeWidth="2" />
              </TabShape>
              <TabText>实时列表显示</TabText>
            </Tab>
            <TabClose><CrossMark /></TabClose>
          </TabStrip>
          <GridFrame>
            <GridBody>
              <ColumnHeaders>
                <CornerCell />
                <ColumnHeader $trail={66}><span>馈电状态及时刻</span></ColumnHeader>
                {HEADERS.map((h) => <ColumnHeader key={h}><span>{h}</span></ColumnHeader>)}
                <ColumnHeader><span>状态变动时刻</span></ColumnHeader>
              </ColumnHeaders>
              {READINGS.map((row) => (
                <GridRow key={row.no}>
                  <RowNumber>{row.no}</RowNumber>
                  <Cell $pad={0}>-]</Cell>
                  {row.values.map((v, i) => <Cell key={i}>{v}</Cell>)}
                  <Cell $pad={6}>{row.time}</Cell>
                </GridRow>
              ))}
              <GridRow>
                <RowNumber />
                <Cell $pad={0}>-]</Cell>
                {HEADERS.map((h) => <Cell key={h} />)}
                <Cell />
              </GridRow>
            </GridBody>
            <VTrack>
              <ScrollButton $w={30} $h={32} aria-label="上"><Chevron dir="up" /></ScrollButton>
              <Spacer $size={594} />
              <VThumb><Grip $vertical /></VThumb>
              <Spacer />
              <ScrollButton $w={30} $h={32} aria-label="下"><Chevron dir="down" /></ScrollButton>
            </VTrack>
            <HTrack>
              <ScrollButton $w={34} $h={32} aria-label="左"><Chevron dir="left" /></ScrollButton>
              <Spacer />
              <HThumb><Grip /></HThumb>
              <ScrollButton $w={34} $h={32} aria-label="右"><Chevron dir="right" /></ScrollButton>
            </HTrack>
            <ScrollCorner />
          </GridFrame>
        </DocumentPane>

        <SidePanel>
          <PanelTitle>
            <span>分站实时状态</span>
            <PanelTools><PinMark /><CrossMark /></PanelTools>
          </PanelTitle>
          <PanelBody>
            <StationTable>
              <StationHead>
                <StationHeadCell $trail={10}>{'分\n站\n号'}</StationHeadCell>
                <StationHeadCell $trail={48}>{'安装地\n点'}</StationHeadCell>
                <StationHeadCell $trail={46}>{'采\n区'}</StationHeadCell>
                <StationHeadCell $trail={48}>{'通讯状\n态'}</StationHeadCell>
                <StationHeadCell $trail={44}>电源状态</StationHeadCell>
              </StationHead>
              {STATIONS.map((cells) => (
                <StationRow key={cells[0]} $alarm={cells[0] === '8'}>
                  {cells.map((c, i) => (
                    <StationCell key={i} $selected={cells[0] === '4' && i === 2}>{c}</StationCell>
                  ))}
                </StationRow>
              ))}
            </StationTable>
          </PanelBody>
        </SidePanel>
      </Workspace>

      <StatusBar>
        {STATUS.map(([label, value, Glyph]) => (
          <IconLabel key={label}>
            <Glyph />
            <span>{label}{value && <WideColon>：</WideColon>}{value}</span>
          </IconLabel>
        ))}
      </StatusBar>

      <TaskBar>
        <StartButton><FlagIcon />开始</StartButton>
        <QuickLaunch><MailIcon /><BrowserIcon /><PlusBallIcon /><TilesIcon /></QuickLaunch>
        <TaskButtons>
          <TaskButton $active><BrandIcon color="#0a3c90" /><span>[山西铺龙湾煤业...</span></TaskButton>
          <TaskButton><DocIcon color="#2c8a3c" mark="M6 8 L15 17 M15 8 L6 17" /><span>山西铺龙湾煤业有...</span></TaskButton>
          <TaskButton><DishIcon /><span>瓦斯监测通信系统</span></TaskButton>
          <TaskButton><DocIcon color="#2c4a9c" mark="M4 8 L7 17 L10.5 9 L14 17 L17 8" /><span>甲烷传感器调校及...</span></TaskButton>
          <TaskButton><ConsoleIcon /><span>- FTP瓦斯上传脚...</span></TaskButton>
        </TaskButtons>
        <InputMethod><KeyboardIcon /></InputMethod>
        <Tray>
          <NetworkIcon />
          <NetworkIcon />
          <TerminalIcon />
          <BrandIcon color="#0a3f94" />
          <SpeakerIcon />
          <ShieldIcon />
          <PlusBallIcon />
          <Clock>18:06</Clock>
        </Tray>
      </TaskBar>

      <CornerPatch />
      <FloatingBadge><BadgeArt /></FloatingBadge>
    </Screen>
  );
}
